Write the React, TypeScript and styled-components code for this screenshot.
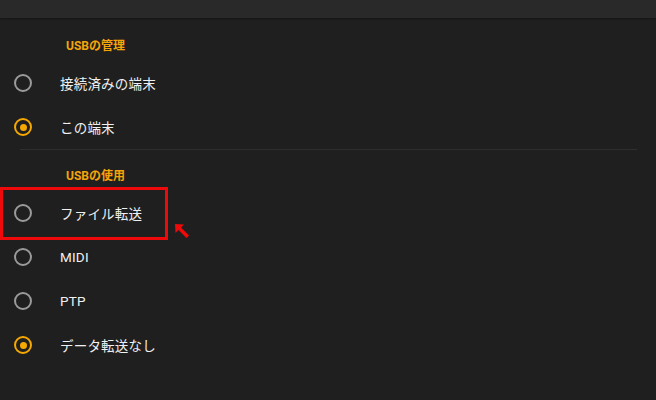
import { createGlobalStyle, styled } from "styled-components";

const GlobalStyle = createGlobalStyle`
  html, body {
    margin: 0;
    padding: 0;
    background: #1f1f1f;
  }
  body {
    font-family: "Roboto", "Noto Sans CJK JP", sans-serif;
  }
`;

const Screen = styled.div`
  width: 656px;
  height: 400px;
  background: #1f1f1f;
  overflow: hidden;
  display: flex;
  flex-direction: column;
`;

const TopBar = styled.div`
  height: 18px;
  flex-shrink: 0;
  background: #292929;
  box-shadow: 0 1px 2px rgba(0, 0, 0, 0.35);
`;

const Section = styled.div`
  display: flex;
  flex-direction: column;
`;

const SectionTitle = styled.div<{ $height: number }>`
  height: ${(p) => p.$height}px;
  display: flex;
  align-items: flex-end;
  padding: 0 0 8px 66px;
  box-sizing: border-box;
  font-size: 12px;
  line-height: 14px;
  font-weight: 700;
  color: #f5a50a;
  font-family: "Roboto", "Noto Sans CJK JP", sans-serif;
`;

const Row = styled.div`
  position: relative;
  height: 44px;
  display: flex;
  align-items: center;
  padding-left: 14px;
  gap: 28px;
`;

const Radio = styled.span<{ $checked?: boolean }>`
  width: 18px;
  height: 18px;
  box-sizing: border-box;
  border-radius: 50%;
  border: 2px solid ${(p) => (p.$checked ? "#f5a800" : "#9a9a9a")};
  display: flex;
  align-items: center;
  justify-content: center;

  &::after {
    content: "";
    display: ${(p) => (p.$checked ? "block" : "none")};
    width: 7px;
    height: 7px;
    border-radius: 50%;
    background: #f5a800;
  }
`;

const Label = styled.span`
  font-size: 13.5px;
  font-weight: 400;
  color: #f0f0f0;
  font-family: "Roboto", "Noto Sans CJK JP", sans-serif;
  letter-spacing: 0.2px;
`;

const Divider = styled.div`
  height: 1px;
  margin: 0 19px 0 20px;
  background: #2f2f2f;
`;

const Highlight = styled.div`
  position: absolute;
  left: 0;
  top: -4px;
  width: 168px;
  height: 53px;
  box-sizing: border-box;
  border: 3px solid #ee0a0a;
  pointer-events: none;
`;

const Pointer = styled.svg`
  position: absolute;
  left: 174px;
  top: 32px;
`;

interface Option {
  label: string;
  checked?: boolean;
  marked?: boolean;
}

const manage: Option[] = [
  { label: "接続済みの端末" },
  { label: "この端末", checked: true },
];

const usage: Option[] = [
  { label: "ファイル転送", marked: true },
  { label: "MIDI" },
  { label: "PTP" },
  { label: "データ転送なし", checked: true },
];

const OptionRow = ({ option }: { option: Option }) => (
  <Row>
    <Radio $checked={option.checked} />
    <Label>{option.label}</Label>
    {option.marked && (
      <>
        <Highlight />
        <Pointer width="16" height="16" viewBox="0 0 16 16">
          <path d="M1 1 L10 1.5 L7 4.5 L15 12.5 L12.5 15 L4.5 7 L1.5 10 Z" fill="#ee0a0a" />
        </Pointer>
      </>
    )}
  </Row>
);

const App = () => {
  return (
    <>
      <GlobalStyle />
      <Screen>
        <TopBar />
        <Section>
          <SectionTitle $height={43}>USBの管理</SectionTitle>
          {manage.map((o) => (
            <OptionRow key={o.label} option={o} />
          ))}
        </Section>
        <Divider />
        <Section>
          <SectionTitle $height={41}>USBの使用</SectionTitle>
          {usage.map((o) => (
            <OptionRow key={o.label} option={o} />
          ))}
        </Section>
      </Screen>
    </>
  );
};

export default App;
